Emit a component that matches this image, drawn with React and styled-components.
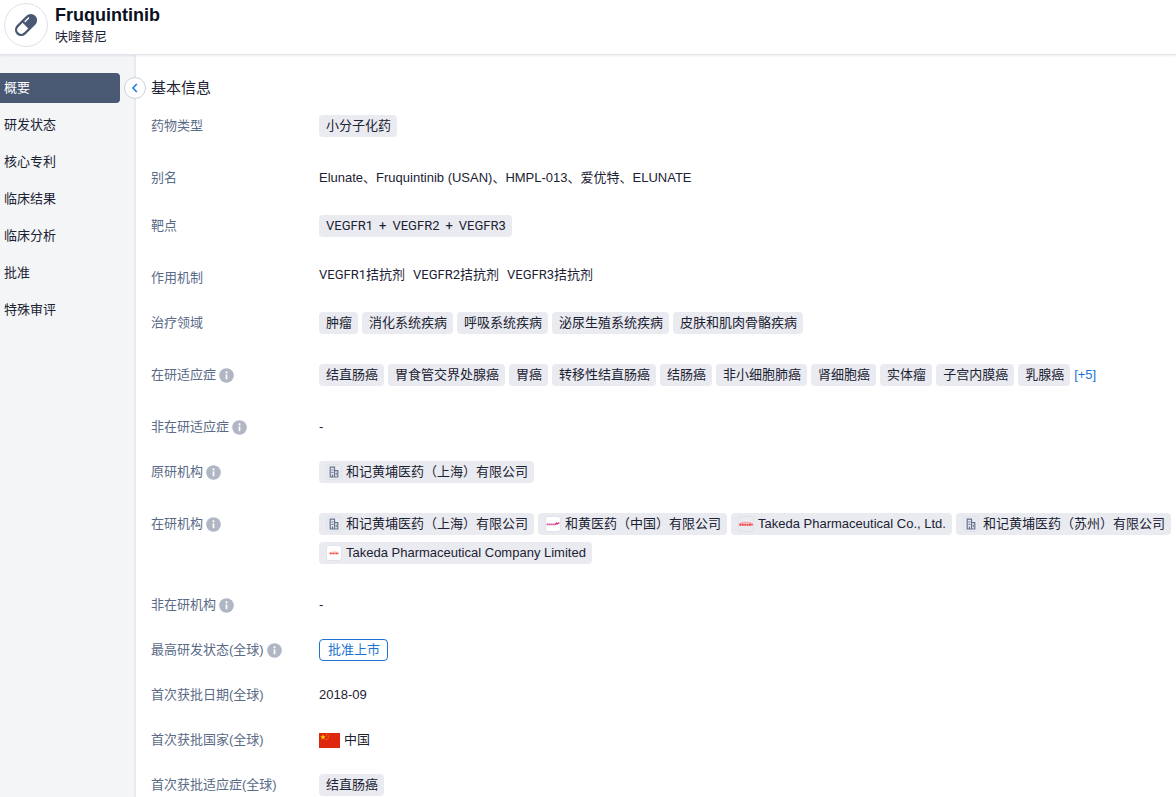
import React from "react";
import styled, { createGlobalStyle } from "styled-components";

const GlobalStyle = createGlobalStyle`
  * {
    box-sizing: border-box;
  }
  body {
    margin: 0;
    background: #fff;
    color: #1c2233;
    font-family: "Liberation Sans", "Noto Sans CJK SC", sans-serif;
    font-size: 13px;
    line-height: 22px;
  }
`;

const Page = styled.div`
  display: flex;
  flex-direction: column;
  height: 100vh;
  overflow: hidden;
`;

const Header = styled.header`
  display: flex;
  flex-shrink: 0;
  gap: 7px;
  padding: 3px 4px 6px;
  border-bottom: 1px solid #e2e4e9;
  box-shadow: 0 1px 2px rgba(30, 40, 70, 0.08);
  z-index: 1;
`;

const DrugIcon = styled.div`
  display: flex;
  align-items: center;
  justify-content: center;
  width: 44px;
  height: 44px;
  border: 1px solid #dfe1e8;
  border-radius: 50%;
`;

const DrugName = styled.h1`
  margin: 2px 0 0;
  color: #0b1020;
  font-size: 18px;
  line-height: 20px;
`;

const DrugAlias = styled.p`
  margin: 1px 0 0;
`;

const Body = styled.div`
  display: flex;
  flex: 1;
  min-height: 0;
`;

const Sidebar = styled.nav`
  position: relative;
  flex: 0 0 136px;
  padding: 18px 14px 0 0;
  background: #f3f5f7;
  border-right: 2px solid #e9eaef;
`;

const NavItem = styled.a`
  display: block;
  padding: 4px;
  border-radius: 0 4px 4px 0;
  background: ${props => (props.$active ? "#495973" : "transparent")};
  color: ${props => (props.$active ? "#fff" : "#1c2233")};
  line-height: 22px;
  text-decoration: none;
`;

const NavList = styled.div`
  display: flex;
  flex-direction: column;
  gap: 7px;
`;

const CollapseButton = styled.button`
  position: absolute;
  top: 22px;
  right: -12px;
  display: flex;
  align-items: center;
  justify-content: center;
  width: 22px;
  height: 22px;
  padding: 0;
  border: 1px solid #cdd1da;
  border-radius: 50%;
  background: #fff;
  color: #1c7be0;
`;

const Content = styled.main`
  flex: 1;
  min-width: 0;
  padding: 22px 0 0 15px;
`;

const SectionTitle = styled.h2`
  margin: 0 0 16px;
  font-size: 15px;
  font-weight: 400;
  line-height: 22px;
`;

const Row = styled.div`
  display: flex;
  padding-bottom: ${props => (props.$tall ? "26px" : "23px")};
`;

const Label = styled.div`
  display: flex;
  align-items: center;
  flex: 0 0 168px;
  gap: 3px;
  height: 22px;
  color: #5a6b87;
`;

const Value = styled.div`
  flex: 1;
  min-width: 0;
`;

const Mechanisms = styled.div`
  display: flex;
  gap: 8px;
  font-family: Roboto, "Noto Sans CJK SC", sans-serif;
  line-height: 16px;
`;

const Tags = styled.div`
  display: flex;
  flex-wrap: wrap;
  gap: 7px 4px;
  padding-bottom: 7px;
`;

const Tag = styled.span`
  display: flex;
  align-items: center;
  gap: 4px;
  height: 22px;
  padding: 0 6px 0 7px;
  border-radius: 4px;
  background: #e9ebf0;
  white-space: nowrap;
`;

const TargetTag = styled(Tag)`
  font-family: Roboto, "Noto Sans CJK SC", sans-serif;
  gap: 6px;
`;

const More = styled.a`
  color: #1c73d4;
  text-decoration: none;
`;

const Status = styled.span`
  display: inline-block;
  height: 22px;
  padding: 0 7px 0 8px;
  border: 1px solid #1c73d4;
  border-radius: 4px;
  color: #1c73d4;
  line-height: 20px;
  vertical-align: top;
`;

const Country = styled.div`
  display: flex;
  align-items: center;
  gap: 4px;
`;

const LogoBox = styled.span`
  display: flex;
  align-items: center;
  justify-content: center;
  width: 16px;
  height: 16px;
  border: 1px solid #e0e3ea;
  border-radius: 3px;
  background: ${props => (props.$white ? "#fff" : "transparent")};
`;

function PillIcon() {
  return (
    <svg width="28" height="28" viewBox="0 0 24 24" aria-hidden="true">
      <g transform="rotate(-45 12 12)">
        <rect x="0.8" y="6.6" width="22.4" height="10.8" rx="5.4" fill="#495973" />
        <path d="M11.3 8.6H6.2a3.4 3.4 0 0 0 0 6.8h5.1z" fill="#fff" />
        <path d="M13.6 9.3h4.2" stroke="#fff" strokeWidth="1.2" strokeLinecap="round" />
      </g>
    </svg>
  );
}

function InfoIcon() {
  return (
    <svg width="15" height="15" viewBox="0 0 15 15" aria-hidden="true">
      <circle cx="7.5" cy="7.5" r="7.3" fill="#b0b6c4" />
      <circle cx="7.5" cy="4.3" r="1.1" fill="#fff" />
      <path d="M7.5 6.4v4.8" stroke="#fff" strokeWidth="1.7" />
    </svg>
  );
}

function BuildingIcon() {
  return (
    <svg width="10" height="12" viewBox="0 0 10 12" fill="none" stroke="#66758f" aria-hidden="true">
      <path d="M1.2 11V1.2h4.3V11M5.5 4.6h3.3V11M.6 11h8.8" strokeWidth="1.2" />
      <path d="M2.4 4h2M2.4 6.4h2M7.2 6.6v2.6" strokeWidth="1" />
      <path d="M3.4 11V8.4" strokeWidth="1.2" />
    </svg>
  );
}

function HutchmedLogo() {
  return (
    <svg width="14" height="6" viewBox="0 0 14 6" fill="none" aria-hidden="true">
      <path d="M.5 3.4h9.5" stroke="#d9569f" strokeWidth="1.6" strokeDasharray="1.6 .3" />
      <path d="M9.5 3.7l1-1.6 1 .9 1.9-1.4" stroke="#d92f8a" strokeWidth="1.3" />
    </svg>
  );
}

function TakedaLogo({ small }) {
  return (
    <svg width={small ? 10 : 14} height={small ? 4 : 6} viewBox="0 0 14 6" fill="none" aria-hidden="true">
      <path d="M.2 3.8C2 .6 12 .6 13.8 3.8" stroke="#f9a3a3" strokeWidth="1.2" />
      <path d="M.4 3.8h13.2" stroke="#f04444" strokeWidth="2" strokeDasharray="2 .4" />
    </svg>
  );
}

function ChinaFlag() {
  return (
    <svg width="21" height="15" viewBox="0 0 21 15" role="img" aria-label="CN">
      <rect width="21" height="15" fill="#de2910" />
      <path
        d="M4 1.4l.7 1.9h2L5.1 4.5l.6 1.9L4 5.2 2.3 6.4l.6-1.9L1.3 3.3h2z"
        fill="#ffde00"
      />
      <g fill="#ffb000">
        <circle cx="7.6" cy="1.6" r=".6" />
        <circle cx="9.2" cy="3" r=".6" />
        <circle cx="9.2" cy="5" r=".6" />
        <circle cx="7.6" cy="6.5" r=".6" />
      </g>
    </svg>
  );
}

const logos = {
  building: <LogoBox><BuildingIcon /></LogoBox>,
  hutchmed: <LogoBox $white><HutchmedLogo /></LogoBox>,
  takeda: <LogoBox><TakedaLogo /></LogoBox>,
  takedaSmall: <LogoBox $white><TakedaLogo small /></LogoBox>
};

const navItems = ["概要", "研发状态", "核心专利", "临床结果", "临床分析", "批准", "特殊审评"];

const areas = ["肿瘤", "消化系统疾病", "呼吸系统疾病", "泌尿生殖系统疾病", "皮肤和肌肉骨骼疾病"];

const indications = [
  "结直肠癌",
  "胃食管交界处腺癌",
  "胃癌",
  "转移性结直肠癌",
  "结肠癌",
  "非小细胞肺癌",
  "肾细胞癌",
  "实体瘤",
  "子宫内膜癌",
  "乳腺癌"
];

const organizations = [
  { name: "和记黄埔医药（上海）有限公司", logo: "building" },
  { name: "和黄医药（中国）有限公司", logo: "hutchmed" },
  { name: "Takeda Pharmaceutical Co., Ltd.", logo: "takeda" },
  { name: "和记黄埔医药（苏州）有限公司", logo: "building" },
  { name: "Takeda Pharmaceutical Company Limited", logo: "takedaSmall" }
];

function InfoRow(props) {
  return (
    <Row $tall={props.tall}>
      <Label>
        {props.label}
        {props.info && <InfoIcon />}
      </Label>
      <Value>{props.children}</Value>
    </Row>
  );
}

function TagList({ items, children }) {
  return (
    <Tags>
      {items.map(item => (
        <Tag key={item}>{item}</Tag>
      ))}
      {children}
    </Tags>
  );
}

function OrganizationList({ items }) {
  return (
    <Tags>
      {items.map(item => (
        <Tag key={item.name}>
          {logos[item.logo]}
          {item.name}
        </Tag>
      ))}
    </Tags>
  );
}

export default function App() {
  return (
    <Page>
      <GlobalStyle />
      <Header>
        <DrugIcon>
          <PillIcon />
        </DrugIcon>
        <div>
          <DrugName>Fruquintinib</DrugName>
          <DrugAlias>呋喹替尼</DrugAlias>
        </div>
      </Header>
      <Body>
        <Sidebar>
          <NavList>
            {navItems.map((item, index) => (
              <NavItem key={item} href={`#${item}`} $active={index === 0}>
                {item}
              </NavItem>
            ))}
          </NavList>
          <CollapseButton type="button" aria-label="收起">
            <svg width="8" height="10" viewBox="0 0 8 10" fill="none" stroke="currentColor" strokeWidth="1.6">
              <path d="M5.8 1L2 5l3.8 4" />
            </svg>
          </CollapseButton>
        </Sidebar>
        <Content>
          <SectionTitle>基本信息</SectionTitle>
          <InfoRow label="药物类型">
            <TagList items={["小分子化药"]} />
          </InfoRow>
          <InfoRow label="别名" tall>
            Elunate、Fruquintinib (USAN)、HMPL-013、爱优特、ELUNATE
          </InfoRow>
          <InfoRow label="靶点">
            <Tags>
              <TargetTag>
                <span>VEGFR1</span>
                <span>+</span>
                <span>VEGFR2</span>
                <span>+</span>
                <span>VEGFR3</span>
              </TargetTag>
            </Tags>
          </InfoRow>
          <InfoRow label="作用机制">
            <Mechanisms>
              <span>VEGFR1拮抗剂</span>
              <span>VEGFR2拮抗剂</span>
              <span>VEGFR3拮抗剂</span>
            </Mechanisms>
          </InfoRow>
          <InfoRow label="治疗领域">
            <TagList items={areas} />
          </InfoRow>
          <InfoRow label="在研适应症" info>
            <TagList items={indications}>
              <More href="#more">[+5]</More>
            </TagList>
          </InfoRow>
          <InfoRow label="非在研适应症" info>-</InfoRow>
          <InfoRow label="原研机构" info>
            <OrganizationList items={organizations.slice(0, 1)} />
          </InfoRow>
          <InfoRow label="在研机构" info>
            <OrganizationList items={organizations} />
          </InfoRow>
          <InfoRow label="非在研机构" info>-</InfoRow>
          <InfoRow label="最高研发状态(全球)" info>
            <Status>批准上市</Status>
          </InfoRow>
          <InfoRow label="首次获批日期(全球)">2018-09</InfoRow>
          <InfoRow label="首次获批国家(全球)">
            <Country>
              <ChinaFlag />
              中国
            </Country>
          </InfoRow>
          <InfoRow label="首次获批适应症(全球)">
            <TagList items={["结直肠癌"]} />
          </InfoRow>
        </Content>
      </Body>
    </Page>
  );
}
